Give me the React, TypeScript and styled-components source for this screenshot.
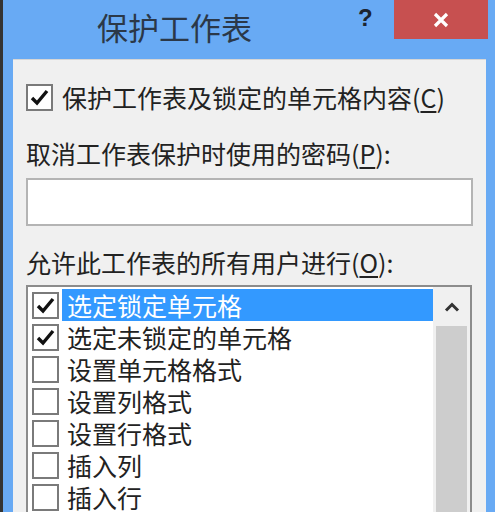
import React from 'react';
import styled, { createGlobalStyle } from 'styled-components';

const GlobalStyle = createGlobalStyle`
  html, body {
    margin: 0;
    padding: 0;
    background: #343434;
  }
  body {
    font-family: "Noto Sans CJK SC", "Noto Sans", "Liberation Sans", sans-serif;
  }
`;

const Page = styled.div`
  display: flex;
  width: 495px;
  height: 512px;
  overflow: hidden;
  background: #343434;
`;

const Window = styled.div`
  flex: 1;
  margin-left: 3px;
  display: flex;
  flex-direction: column;
  background: #68aaf4;
`;

const TitleBar = styled.div`
  display: flex;
  align-items: flex-start;
  height: 59px;
  flex-shrink: 0;
`;

const Title = styled.div`
  flex: 1;
  padding: 8px 0 0 94px;
  font-size: 31px;
  line-height: 38px;
  color: #2b3848;
`;

const HelpButton = styled.div`
  width: 36px;
  padding-top: 3px;
  font-family: "Liberation Sans", sans-serif;
  font-weight: bold;
  font-size: 24px;
  line-height: 30px;
  color: #1c2530;
`;

const CloseButton = styled.div`
  display: flex;
  align-items: center;
  justify-content: center;
  width: 94px;
  height: 39px;
  margin-right: 7px;
  background: #c75050;
`;

const Panel = styled.div`
  flex: 1;
  margin: 0 9px 0 10px;
  padding: 23px 13px 0 13px;
  background: #f0f0f0;
  border-top: 1px solid #d6d6d6;
  display: flex;
  flex-direction: column;
  overflow: hidden;
  & > * {
    flex-shrink: 0;
  }
`;

const CheckRow = styled.label`
  display: flex;
  align-items: center;
  height: 28px;
  gap: 9px;
  font-size: 25px;
  line-height: 28px;
  color: #222;
`;

const Box = styled.span`
  display: flex;
  align-items: center;
  justify-content: center;
  box-sizing: border-box;
  width: 27px;
  height: 27px;
  flex-shrink: 0;
  border: 2px solid #7a7a7a;
  background: #fff;
`;

const Underline = styled.span`
  text-decoration: underline;
  text-underline-offset: 3px;
`;

const FieldLabel = styled.div<{ $gap: number }>`
  margin-top: ${p => p.$gap}px;
  font-size: 25px;
  line-height: 30px;
  color: #222;
`;

const Input = styled.div`
  box-sizing: border-box;
  height: 48px;
  width: 447px;
  margin-top: 10px;
  border: 2px solid #b4b4b4;
  background: #fff;
`;

const ListBox = styled.div`
  display: flex;
  box-sizing: border-box;
  width: 446px;
  height: 260px;
  margin-top: 8px;
  border: 2px solid #8c8c8c;
  background: #fff;
`;

const Items = styled.div`
  flex: 1;
  padding-top: 2px;
  display: flex;
  flex-direction: column;
  overflow: hidden;
`;

const Item = styled.div`
  display: flex;
  align-items: center;
  height: 32px;
  flex-shrink: 0;
  padding-left: 4px;
  gap: 3px;
`;

const ItemText = styled.span<{ $selected?: boolean }>`
  flex: 1;
  height: 32px;
  padding-left: 5px;
  font-size: 25px;
  line-height: 32px;
  color: ${p => (p.$selected ? '#fff' : '#222')};
  background: ${p => (p.$selected ? '#3399ff' : 'transparent')};
`;

const ScrollBar = styled.div`
  width: 37px;
  display: flex;
  flex-direction: column;
  background: #f0f0f0;
`;

const ScrollArrow = styled.div`
  display: flex;
  align-items: center;
  justify-content: center;
  height: 39px;
`;

const Thumb = styled.div`
  flex: 1;
  margin: 0 3px;
  background: #cdcdcd;
`;

const Check = () => (
  <svg width="19" height="17" viewBox="0 0 19 17">
    <path d="M2 9 L7 14 L17 2" fill="none" stroke="#111" strokeWidth="3.4" />
  </svg>
);

const CheckBox = ({ checked }: { checked?: boolean }) => <Box>{checked && <Check />}</Box>;

const items = [
  { label: '选定锁定单元格', checked: true, selected: true },
  { label: '选定未锁定的单元格', checked: true },
  { label: '设置单元格格式' },
  { label: '设置列格式' },
  { label: '设置行格式' },
  { label: '插入列' },
  { label: '插入行' },
];

export default function App() {
  return (
    <Page>
      <GlobalStyle />
      <Window>
        <TitleBar>
          <Title>保护工作表</Title>
          <HelpButton>?</HelpButton>
          <CloseButton>
            <svg width="16" height="16" viewBox="0 0 16 16">
              <path d="M2 2 L14 14 M14 2 L2 14" stroke="#fff" strokeWidth="3.2" />
            </svg>
          </CloseButton>
        </TitleBar>
        <Panel>
          <CheckRow>
            <CheckBox checked />
            <span>
              保护工作表及锁定的单元格内容(<Underline>C</Underline>)
            </span>
          </CheckRow>
          <FieldLabel $gap={27}>
            取消工作表保护时使用的密码(<Underline>P</Underline>):
          </FieldLabel>
          <Input />
          <FieldLabel $gap={21}>
            允许此工作表的所有用户进行(<Underline>O</Underline>):
          </FieldLabel>
          <ListBox>
            <Items>
              {items.map(it => (
                <Item key={it.label}>
                  <CheckBox checked={it.checked} />
                  <ItemText $selected={it.selected}>{it.label}</ItemText>
                </Item>
              ))}
            </Items>
            <ScrollBar>
              <ScrollArrow>
                <svg width="16" height="10" viewBox="0 0 16 10">
                  <path d="M2 8.5 L8 2.5 L14 8.5" fill="none" stroke="#333" strokeWidth="3" />
                </svg>
              </ScrollArrow>
              <Thumb />
            </ScrollBar>
          </ListBox>
        </Panel>
      </Window>
    </Page>
  );
}
